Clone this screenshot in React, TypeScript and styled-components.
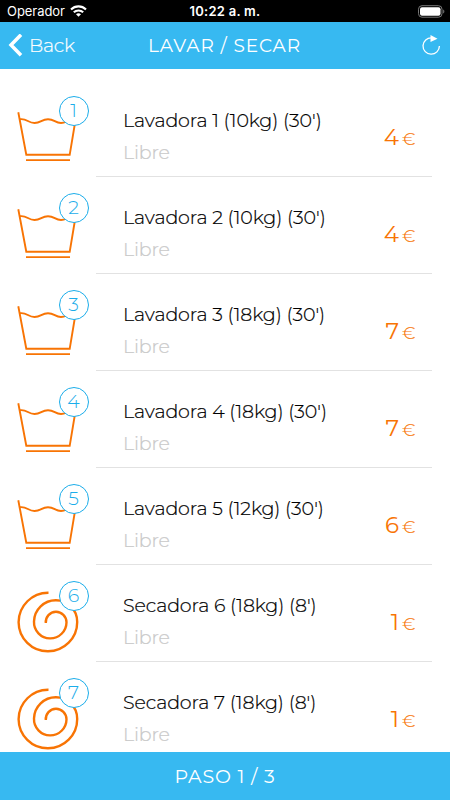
import React from "react";
import styled, { createGlobalStyle } from "styled-components";

const BLUE = "#37b9f1";
const ORANGE = "#f87404";

const GlobalStyle = createGlobalStyle`
  * { box-sizing: border-box; }
  body { margin: 0; background: #fff; }
`;

const Screen = styled.div`
  width: 450px;
  height: 800px;
  display: flex;
  flex-direction: column;
  overflow: hidden;
  background: #fff;
  font-family: Montserrat, Inter, sans-serif;
  font-weight: 300;
`;

const StatusBar = styled.div`
  height: 22px;
  flex: none;
  display: grid;
  grid-template-columns: 1fr auto 1fr;
  align-items: center;
  padding: 0 5px 0 7px;
  background: #000;
  color: #fff;
  font-family: Inter, sans-serif;
  font-size: 13px;
  font-weight: 400;
`;

const Carrier = styled.div`
  display: flex;
  align-items: center;
  gap: 5px;
  letter-spacing: -0.05px;
`;

const Clock = styled.div`
  font-weight: 600;
  letter-spacing: 0.25px;
  margin-right: 2px;
`;

const BatterySlot = styled.div`
  display: flex;
  justify-content: flex-end;
`;

const Header = styled.header`
  height: 47px;
  flex: none;
  display: grid;
  grid-template-columns: 1fr auto 1fr;
  align-items: center;
  padding: 0 9px 0 8px;
  background: ${BLUE};
  color: #fff;
`;

const BackButton = styled.div`
  display: flex;
  align-items: center;
  gap: 6px;
  font-size: 19px;
  letter-spacing: -0.25px;
  -webkit-text-stroke: 0.2px;
`;

const Title = styled.div`
  font-size: 18.5px;
  line-height: 24px;
  font-weight: 400;
  letter-spacing: 0.9px;
`;

const Reload = styled.div`
  display: flex;
  justify-content: flex-end;
`;

const List = styled.main`
  flex: 1;
  min-height: 0;
  overflow: hidden;
  padding-top: 11px;
`;

const Row = styled.div`
  height: 97px;
  display: grid;
  grid-template-columns: 96px 336px;
`;

const IconCell = styled.div`
  position: relative;
  color: ${ORANGE};
  svg { display: block; }
`;

const Badge = styled.div`
  position: absolute;
  left: 59px;
  top: 15.5px;
  width: 30px;
  height: 30px;
  border: 1px solid #1badea;
  border-radius: 50%;
  background: #fff;
  color: #1badea;
  display: flex;
  align-items: center;
  justify-content: center;
  padding-right: 1px;
  font-size: 19px;
  line-height: 1;
`;

const Body = styled.div`
  display: flex;
  justify-content: space-between;
  padding: 28px 17px 0 27px;
  border-bottom: 1px solid #e2e2e2;
`;

const Name = styled.div`
  font-size: 19px;
  line-height: 26px;
  letter-spacing: -0.1px;
  -webkit-text-stroke: 0.2px;
  color: #000;
  white-space: nowrap;
`;

const State = styled.div`
  margin-top: 6px;
  font-size: 19px;
  line-height: 26px;
  letter-spacing: -0.15px;
  -webkit-text-stroke: 0.2px;
  color: #c8c8c8;
`;

const Price = styled.div`
  display: flex;
  align-items: baseline;
  gap: 3px;
  padding-top: 13px;
  color: ${ORANGE};
  font-size: 23px;
  line-height: 32px;
  font-weight: 400;
`;

const Euro = styled.span`
  font-size: 17px;
  font-weight: 300;
  width: 13px;
  -webkit-text-stroke: 0.15px;
`;

const Footer = styled.footer`
  height: 48px;
  flex: none;
  display: flex;
  align-items: center;
  justify-content: center;
  background: ${BLUE};
  color: #fff;
  font-size: 19px;
  font-weight: 400;
  letter-spacing: 0.8px;
`;

const Wifi = () => (
  <svg width="17" height="12" viewBox="0 0 17 12" fill="none" stroke="#fff" strokeWidth="2.1">
    <path d="M1 4.5C5.2.3 11.8.3 16 4.5M3.8 7.3c2.6-2.5 6.8-2.5 9.4 0" />
    <path d="M8.5 11.8 6 9.2c1.4-1.3 3.6-1.3 5 0z" fill="#fff" stroke="none" />
  </svg>
);

const Battery = () => (
  <svg width="28" height="13" viewBox="0 0 28 13">
    <rect x="1.5" y=".7" width="23.5" height="11.5" rx="3.5" fill="none" stroke="#777" />
    <rect x="3" y="2.2" width="20.5" height="8.5" rx="2" fill="#fff" />
    <path d="M26.2 4.5c1.6.7 1.6 3.3 0 4z" fill="#777" />
  </svg>
);

const Chevron = () => (
  <svg width="15" height="24" viewBox="0 0 15 24" fill="none" stroke="#fff" strokeWidth="3.5">
    <path d="M13 .7 3 11l10 10.3" />
  </svg>
);

const ReloadIcon = () => (
  <svg width="19" height="22" viewBox="0 0 19 22" fill="none">
    <path d="M9.7 2.8A8.2 8.2 0 1 0 17.4 11" stroke="#fff" strokeWidth="1.3" />
    <path d="M8.5 0v7l7-3.3z" fill="#fff" />
  </svg>
);

const Tub = () => (
  <svg width="96" height="96" viewBox="0 0 96 96" fill="none" stroke="currentColor" strokeWidth="1.9">
    <path d="M18.3 32.3 26.3 74.8H69.7L76 37M26 80.1H70" />
    <path d="M20 39.2C27 38.2 28 43 34.5 43S41.5 39.2 48 39.2 55 43 61 43c3 0 4-.8 6-2" />
  </svg>
);

const Spiral = () => (
  <svg width="96" height="96" viewBox="0 0 96 96" fill="none" stroke="currentColor" strokeWidth="2.4">
    <path d="M48.5 27.8A29.5 29.5 0 0 0 18.6 57.2 29.3 29.3 0 0 0 48 86.3 29.2 29.2 0 0 0 77.2 57C77.2 44.5 67.5 35.3 56 35.3A21.8 21.8 0 0 0 34 56.5 16.3 16.3 0 0 0 50 73.4 16.3 16.3 0 0 0 66.5 57.2 10.6 10.6 0 0 0 56 46.8 10.3 10.3 0 0 0 45.8 58" />
  </svg>
);

interface Machine {
  id: number;
  name: string;
  price: number;
  dryer?: boolean;
}

const machines: Machine[] = [
  { id: 1, name: "Lavadora 1 (10kg) (30')", price: 4 },
  { id: 2, name: "Lavadora 2 (10kg) (30')", price: 4 },
  { id: 3, name: "Lavadora 3 (18kg) (30')", price: 7 },
  { id: 4, name: "Lavadora 4 (18kg) (30')", price: 7 },
  { id: 5, name: "Lavadora 5 (12kg) (30')", price: 6 },
  { id: 6, name: "Secadora 6 (18kg) (8')", price: 1, dryer: true },
  { id: 7, name: "Secadora 7 (18kg) (8')", price: 1, dryer: true },
];

export default function App() {
  return (
    <Screen>
      <GlobalStyle />
      <StatusBar>
        <Carrier>Operador <Wifi /></Carrier>
        <Clock>10:22 a. m.</Clock>
        <BatterySlot><Battery /></BatterySlot>
      </StatusBar>
      <Header>
        <BackButton><Chevron />Back</BackButton>
        <Title>LAVAR / SECAR</Title>
        <Reload><ReloadIcon /></Reload>
      </Header>
      <List>
        {machines.map((m) => (
          <Row key={m.id}>
            <IconCell>
              {m.dryer ? <Spiral /> : <Tub />}
              <Badge>{m.id}</Badge>
            </IconCell>
            <Body>
              <div>
                <Name>{m.name}</Name>
                <State>Libre</State>
              </div>
              <Price>{m.price}<Euro>€</Euro></Price>
            </Body>
          </Row>
        ))}
      </List>
      <Footer>PASO 1 / 3</Footer>
    </Screen>
  );
}
